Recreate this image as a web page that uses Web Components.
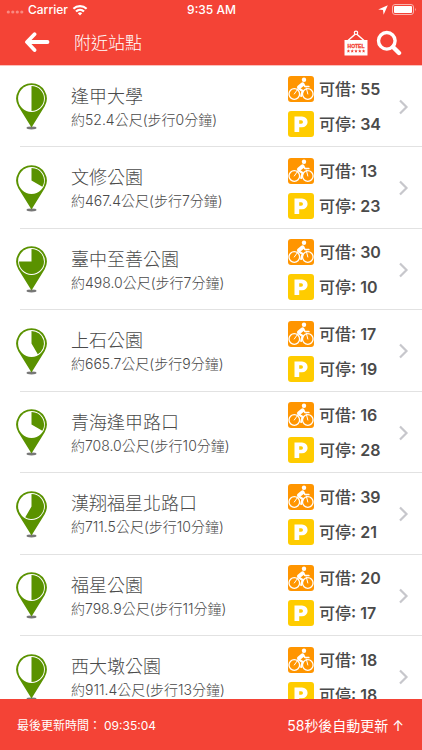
<!DOCTYPE html>
<html lang="zh-Hant">
<head>
<meta charset="utf-8">
<meta name="viewport" content="width=device-width, initial-scale=1">
<title>附近站點</title>
<style>
    html, body {
        height: 100%;
    }
    body {
        margin: 0;
        background: #fff;
        color: #4a4a4a;
        font-family: Inter, "Noto Sans CJK TC", sans-serif;
    }
</style>
</head>
<body>
<bike-app></bike-app>

<script>
// phone status bar: signal, clock, battery
class StatusBar extends HTMLElement {
    constructor() {
        super();
        this._shadowRoot = this.attachShadow({mode: "open"})
    }

    connectedCallback() {
        this._shadowRoot.innerHTML = `
            <style>
                :host {
                    display: grid;
                    grid-template-columns: 1fr auto 1fr;
                    align-items: center;
                    height: 20px;
                    padding: 0 5px 0 6px;
                    font-size: 12px;
                    font-weight: 500;
                    line-height: 20px;
                }
                div {
                    display: flex;
                    align-items: center;
                    gap: 4px;
                }
                .right {
                    justify-content: flex-end;
                }
                svg {
                    display: block;
                }
            </style>
            <div>
                <svg width="18" height="12" fill="#f98a81">
                    <circle cx="2.3" cy="8" r="1.6"/><circle cx="6.8" cy="8" r="1.6"/>
                    <circle cx="11.3" cy="8" r="1.6"/><circle cx="15.8" cy="8" r="1.6"/>
                </svg>
                <span>Carrier</span>
                <svg width="16" height="12" fill="none" stroke="#fff" stroke-width="2.2">
                    <path d="M1.4 4.7a9.6 9.6 0 0 1 13.2 0"/>
                    <path d="M4 7.5a5.8 5.8 0 0 1 8 0"/>
                    <path d="M8 11.6L5.8 9.3a3.2 3.2 0 0 1 4.4 0z" fill="#fff" stroke="none"/>
                </svg>
            </div>
            <span><slot></slot></span>
            <div class="right">
                <svg width="10" height="10" fill="#fff"><path d="M9.8 .2L5.6 9.8 5 5 .2 4.4z"/></svg>
                <svg width="25" height="12">
                    <rect x=".5" y=".5" width="21" height="10" rx="2.5" fill="none" stroke="#fbb3ad"/>
                    <rect x="2" y="2" width="18" height="7" rx="1" fill="#fff"/>
                    <path d="M23 3.8q1.6 1.7 0 3.4z" fill="#fbb3ad"/>
                </svg>
            </div>
        `
    }
}

class AppHeader extends HTMLElement {
    constructor() {
        super();
        this._shadowRoot = this.attachShadow({mode: "open"})
    }

    connectedCallback() {
        this._shadowRoot.innerHTML = `
            <style>
                :host {
                    display: block;
                    background: #f44336;
                    color: #fff;
                    border-bottom: 1px solid #fbc0bb;
                }
                nav {
                    display: flex;
                    align-items: center;
                    height: 45px;
                    padding: 0 20px 0 24px;
                }
                h1 {
                    flex: 1;
                    margin: 0 0 0 24px;
                    font-size: 17px;
                    font-weight: 300;
                    line-height: 24px;
                }
                button {
                    padding: 0;
                    border: 0;
                    background: none;
                    cursor: pointer;
                }
                button + button {
                    margin-left: 8px;
                }
                svg {
                    display: block;
                }
            </style>
            <status-bar>9:35 AM</status-bar>
            <nav>
                <button aria-label="返回">
                    <svg width="26" height="22" fill="none" stroke="#fff" stroke-width="3.8" stroke-linecap="round" stroke-linejoin="round">
                        <path d="M10.500 2.200L3 10l7.500 8M3.500 10h20"/>
                    </svg>
                </button>
                <h1><slot></slot></h1>
                <button aria-label="飯店">
                    <svg width="24" height="26">
                        <path d="M4 10.5L12 3.5l8 7" fill="none" stroke="#fff" stroke-width="1.4"/>
                        <circle cx="12" cy="2.8" r="1.7" fill="#f44336" stroke="#fff" stroke-width="1.2"/>
                        <path d="M.5 10h23v15.5H.5z" fill="#fff"/>
                        <text x="12" y="18" text-anchor="middle" font-size="5" font-weight="900" fill="#f44336" stroke="#f44336" stroke-width=".3">HOTEL</text>
                        <g fill="#f44336">
                            <path id="s" d="M4.4 19.3l.5 1.1 1.2.1-.9.8.3 1.2-1.1-.6-1.1.6.3-1.2-.9-.8 1.2-.1z"/>
                            <use href="#s" x="3.8"/><use href="#s" x="7.6"/><use href="#s" x="11.4"/><use href="#s" x="15.2"/>
                        </g>
                    </svg>
                </button>
                <button aria-label="搜尋">
                    <svg width="26" height="26" fill="none" stroke="#fff">
                        <circle cx="10.8" cy="10.8" r="8.3" stroke-width="3.4"/>
                        <path d="M17 17l6 6" stroke-width="4.4" stroke-linecap="round"/>
                    </svg>
                </button>
            </nav>
        `
    }
}

// map pin, the pie shows the share of bikes that are in, level is in degrees
class StationPin extends HTMLElement {
    constructor() {
        super();
        this._shadowRoot = this.attachShadow({mode: "open"})
    }

    connectedCallback() {
        const level = Number(this.getAttribute("level"))
        const rad = level * Math.PI / 180
        const x = (15.5 + 12.5 * Math.sin(rad)).toFixed(2)
        const y = (15.5 - 12.5 * Math.cos(rad)).toFixed(2)
        this._shadowRoot.innerHTML = `
            <style>
                :host {
                    display: block;
                }
                svg {
                    display: block;
                }
            </style>
            <svg width="31" height="47">
                <ellipse cx="15.5" cy="45" rx="5" ry="1.4" fill="#777"/>
                <path d="M15.5 .2A15.3 15.3 0 0 0 2.300 23.200L15.500 44.500 28.700 23.200A15.3 15.3 0 0 0 15.5 .2z" fill="#5a9200"/>
                <circle cx="15.5" cy="15.5" r="13.4" fill="#fff"/>
                <path d="M15.5 15.5V3A12.5 12.5 0 ${level > 180 ? 1 : 0} 1 ${x} ${y}z" fill="#5a9200"/>
            </svg>
        `
    }
}

class StationCount extends HTMLElement {
    constructor() {
        super();
        this._shadowRoot = this.attachShadow({mode: "open"})
    }

    connectedCallback() {
        const bike = `
            <svg width="26" height="26">
                <rect width="26" height="26" rx="3" fill="#ff9500"/>
                <g fill="none" stroke="#fff" stroke-linecap="round" stroke-linejoin="round">
                    <circle cx="6.3" cy="18" r="5.3" stroke-width="1.3"/>
                    <circle cx="19.8" cy="18" r="5.3" stroke-width="1.3"/>
                    <path d="M14.6 8.3L11 11.300" stroke-width="4"/>
                    <path d="M10.600 12.400l4 2.600-1.400 5" stroke-width="2.200"/>
                    <path d="M15.500 8.500l1.500 2h3.800" stroke-width="1.700"/>
                    <path d="M6.3 18l3.200-4.500M18.300 12l1.500 6" stroke-width="1"/>
                </g>
                <circle cx="16" cy="3.8" r="2.2" fill="#fff"/>
            </svg>`
        const parking = `
            <svg width="26" height="26">
                <rect width="26" height="26" rx="3" fill="#ffcc00"/>
                <path fill="#fff" fill-rule="evenodd" d="M6.5 5.5h7.5a5.6 5.4 0 0 1 0 10.8h-2.8v4.7H6.5zM11.2 9.2v3.6h2a1.8 1.8 0 0 0 0-3.6z"/>
            </svg>`
        this._shadowRoot.innerHTML = `
            <style>
                :host {
                    display: flex;
                    align-items: center;
                    gap: 5px;
                    font-size: 16px;
                    font-weight: 600;
                    line-height: 26px;
                    white-space: nowrap;
                }
                svg {
                    display: block;
                }
                .label {
                    font-weight: 500;
                }
            </style>
            ${this.getAttribute("kind") === "bike" ? bike : parking}
            <span><span class="label">${this.getAttribute("kind") === "bike" ? "可借" : "可停"}</span>: <slot></slot></span>
        `
    }
}

class StationRow extends HTMLElement {
    constructor() {
        super();
        this._shadowRoot = this.attachShadow({mode: "open"})
    }

    connectedCallback() {
        this._shadowRoot.innerHTML = `
            <style>
                :host {
                    display: grid;
                    background: linear-gradient(#e2e2e2, #e2e2e2) 20px 100% / 100% 1px no-repeat;
                }
                a {
                    display: flex;
                    align-items: center;
                    padding: 0 13px 0 16px;
                    color: inherit;
                    text-decoration: none;
                }
                .info {
                    flex: 1;
                    min-width: 0;
                    margin-left: 24px;
                    white-space: nowrap;
                    font-weight: 300;
                }
                .name {
                    font-size: 18px;
                    line-height: 26px;
                }
                .walk {
                    font-size: 14px;
                    line-height: 20px;
                }
                .counts {
                    display: grid;
                    gap: 9px;
                    width: 110px;
                }
                svg {
                    display: block;
                }
            </style>
            <a href="#">
                <station-pin level="${this.getAttribute("level")}"></station-pin>
                <div class="info">
                    <div class="name"><slot></slot></div>
                    <div class="walk">約${this.getAttribute("metres")}公尺(步行${this.getAttribute("minutes")}分鐘)</div>
                </div>
                <div class="counts">
                    <station-count kind="bike">${this.getAttribute("bikes")}</station-count>
                    <station-count kind="park">${this.getAttribute("docks")}</station-count>
                </div>
                <svg width="11" height="16" fill="none" stroke="#c7c7cc" stroke-width="2.2"><path d="M2 1.5L8.5 8 2 14.5"/></svg>
            </a>
        `
    }
}

class UpdateBar extends HTMLElement {
    constructor() {
        super();
        this._shadowRoot = this.attachShadow({mode: "open"})
    }

    connectedCallback() {
        this._shadowRoot.innerHTML = `
            <style>
                :host {
                    display: flex;
                    align-items: center;
                    justify-content: space-between;
                    height: 51px;
                    padding: 0 18px 0 17px;
                    background: #f44336;
                    color: #fff;
                    font-size: 12px;
                }
                .time {
                    display: flex;
                    align-items: baseline;
                    gap: 3px;
                }
                button {
                    padding: 0;
                    border: 0;
                    background: none;
                    color: inherit;
                    font: inherit;
                    font-size: 14px;
                    cursor: pointer;
                }
            </style>
            <div class="time"><span>最後更新時間：</span><span><slot></slot></span></div>
            <button>${this.getAttribute("seconds")}秒後自動更新 ↑</button>
        `
    }
}

class BikeApp extends HTMLElement {
    constructor() {
        super();
        this._shadowRoot = this.attachShadow({mode: "open"})
    }

    connectedCallback() {
        this._shadowRoot.innerHTML = `
            <style>
                :host {
                    display: flex;
                    flex-direction: column;
                    height: 100%;
                }
                main {
                    flex: 1;
                    min-height: 0;
                    display: grid;
                    grid-auto-rows: 81px 82px;
                    overflow-y: auto;
                    scrollbar-width: none;
                }
            </style>
            <app-header>附近站點</app-header>
            <main>
                <station-row level="180" metres="52.4" minutes="0" bikes="55" docks="34">逢甲大學</station-row>
                <station-row level="120" metres="467.4" minutes="7" bikes="13" docks="23">文修公園</station-row>
                <station-row level="270" metres="498.0" minutes="7" bikes="30" docks="10">臺中至善公園</station-row>
                <station-row level="150" metres="665.7" minutes="9" bikes="17" docks="19">上石公園</station-row>
                <station-row level="120" metres="708.0" minutes="10" bikes="16" docks="28">青海逢甲路口</station-row>
                <station-row level="210" metres="711.5" minutes="10" bikes="39" docks="21">漢翔福星北路口</station-row>
                <station-row level="180" metres="798.9" minutes="11" bikes="20" docks="17">福星公園</station-row>
                <station-row level="180" metres="911.4" minutes="13" bikes="18" docks="18">西大墩公園</station-row>
            </main>
            <update-bar seconds="58">09:35:04</update-bar>
        `
    }
}

window.customElements.define('status-bar', StatusBar)
window.customElements.define('app-header', AppHeader)
window.customElements.define('station-pin', StationPin)
window.customElements.define('station-count', StationCount)
window.customElements.define('station-row', StationRow)
window.customElements.define('update-bar', UpdateBar)
window.customElements.define('bike-app', BikeApp)
</script>
</body>
</html>
